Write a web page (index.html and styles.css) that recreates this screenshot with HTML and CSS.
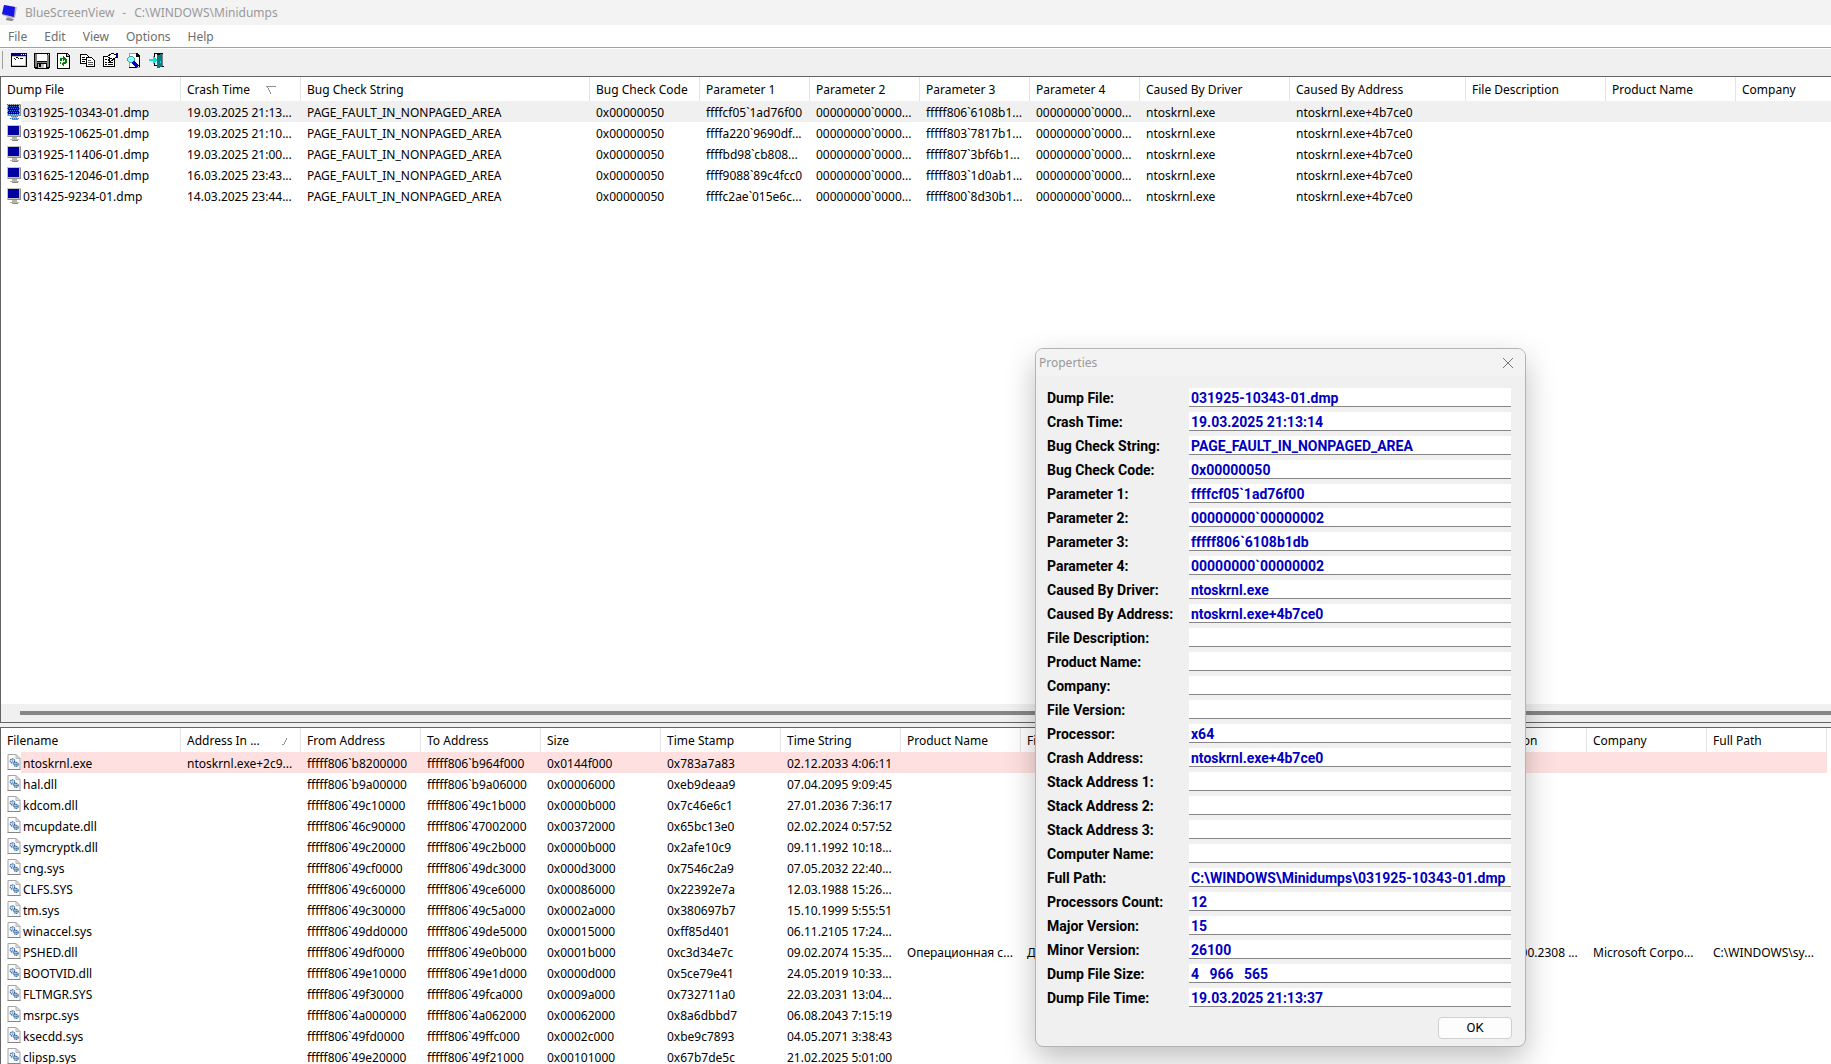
FILE: index.html
```html
<!DOCTYPE html>
<html lang="en">
<head>
<meta charset="utf-8">
<title>BlueScreenView</title>
<link rel="stylesheet" href="styles.css">
</head>
<body>
<svg class="defs" aria-hidden="true">
  <symbol id="dump" viewBox="0 0 14 16">
    <path fill="#c6c3b8" d="M0 0h14v12H0z"/>
    <path fill="#8f8d86" d="M13 1h1v11H1v-1h12z"/>
    <path fill="#0000a0" d="M1 1h11v9H1z"/>
    <path fill="#b5b3aa" d="M5 12h5v2H5zM3 14h9v1H3z"/>
    <path fill="#8a887f" d="M5 15h6v1H5z"/>
  </symbol>
  <symbol id="dump-selected" viewBox="0 0 14 16">
    <use href="#dump"/>
    <path stroke="#2f78d0" stroke-dasharray="1 1" d="M0 .5h14M1 2.500h12M0 4.500h14M1 6.500h12M0 8.500h14M1 10.500h12M4 12.500h7M3 14.500h9"/>
  </symbol>
  <symbol id="dll" viewBox="0 0 13 16">
    <path fill="#fafafa" stroke="#a4a4a4" d="M.5.5h8l4 4v11H.5z"/>
    <path fill="#e4e4e4" stroke="#b4b4b4" d="M8.500.5v4h4z"/>
    <path stroke="#858585" d="M0 15.500h13"/>
    <circle cx="5" cy="7" r="2.200" fill="#dbe8f5" stroke="#2c6298" stroke-width="1.300" stroke-dasharray="1.200 .6"/>
    <circle cx="5" cy="7" r=".6" fill="#2c6298"/>
    <circle cx="8.600" cy="10.400" r="2" fill="#c5dbf0" stroke="#2c6298" stroke-width="1.300" stroke-dasharray="1.200 .5"/>
    <circle cx="8.600" cy="10.400" r=".6" fill="#17456f"/>
  </symbol>
</svg>

<div class="window">
  <header class="titlebar">
    <svg class="app-icon" viewBox="0 0 15 16" aria-hidden="true">
      <path fill="#b9b9b9" d="M2 0l13 2-2 11-4 0 3 2-2 1-6-1 0-2 2-1L0 10z"/>
      <path fill="#1414e6" d="M2 0l11 2-1 10L0 9z"/>
      <path fill="#888" d="M5 13l7 1-2 2-6-1z"/>
    </svg>
    <span>BlueScreenView</span><span>-</span><span>C:\WINDOWS\Minidumps</span>
  </header>

  <nav class="menubar">
    <button>File</button><button>Edit</button><button>View</button><button>Options</button><button>Help</button>
  </nav>

  <div class="toolbar">
    <button aria-label="Advanced options"><svg viewBox="0 0 16 16"><path fill="#000" d="M0 0h16v14H0z"/><path fill="#fff" d="M1 4h14v9H1z"/><path fill="#000080" d="M1 0h15v3H1z"/><path fill="#c0c0c0" d="M1 3h14v1H1zM14 4h1v9h-1zM1 12h14v1H1z"/><path fill="#fff" d="M10 1h1v1h-1zM12 1h1v1h-1zM14 1h1v1h-1z"/><path fill="#000" d="M3 5h1v1H3zM5 4h2v1H5zM7 5h1v1H7zM9 5h3v1H9zM4 6h1v1H4z"/></svg></button>
    <button aria-label="Save"><svg viewBox="0 0 16 16"><path fill="#000" d="M0 0h16v15h-1v1H1v-1H0z"/><path fill="#808080" d="M1 1h2v13H1zM13 2h2v12h-2zM3 9h10v1H3z"/><path fill="#fff" d="M3 1h10v7H3zM14 1h1v1h-1zM10 11h2v4h-2z"/><path fill="#c0c0c0" d="M4 11h6v4H4z"/><path fill="#000" d="M5 11h2v3H5z"/></svg></button>
    <button aria-label="Refresh"><svg viewBox="0 0 16 16"><path fill="#000" d="M0 0h10l3 3v13H0z"/><path fill="#fff" d="M1 1h8v3h3v11H1z"/><path fill="#c0c0c0" d="M10 1l2 2h-2z"/><path fill="#008000" d="M6 3l3 2-3 3V6H5v2H3V5h3zM8 6h2v4H9v1H7v2l-3-2 3-3v1h1zM3 9h1v2H3z"/></svg></button>
    <button aria-label="Copy"><svg viewBox="0 0 16 16"><path fill="#fff" stroke="#000" d="M.5 1.500h6l2 2v7h-8z"/><path stroke="#000" d="M2 4.500h3M2 6.500h4M2 8.500h3"/><path fill="#fff" stroke="#000" d="M6.500 4.500h5l3 3v6h-8z"/><path stroke="#555" d="M8 7.500h3M8 9.500h5M8 11.500h5"/></svg></button>
    <button aria-label="Properties"><svg viewBox="0 0 16 16"><path fill="#fff" stroke="#000" d="M.5 3.500h11v10H.5z"/><path stroke="#000" d="M2 6.500h2M2 9.500h2M5 9.500h5M2 11.500h2M5 11.500h5"/><path fill="#fff" stroke="#000" d="M4.500 3.500l4-3 5 1v3l-3 1-1 2-3 1-1-2 2-1-2-1z"/><path fill="#000080" d="M13 0h2v5h-2z"/><path fill="#fff" d="M6 3h5v1H6z"/></svg></button>
    <button aria-label="Find"><svg viewBox="0 0 16 16"><path fill="#fff" stroke="#a0a0a0" d="M3.500.5h7l3 3v11h-10z"/><path fill="#000" d="M10 0h1l3 3v11h-1V4h-3zM3 14h8v1H3z"/><path fill="#80ffff" stroke="#45a0a0" d="M1.500 5.500l2-2h3l2 2v2l-2 2h-3l-2-2z"/><path fill="#fff" d="M3 5h1v1H3zM5 6h1v1H5zM3 7h1v1H3z"/><path stroke="#0000c0" stroke-width="3" d="M7 9l5 5"/></svg></button>
    <button aria-label="Exit"><svg viewBox="0 0 16 16"><path fill="#000" d="M5 0h9v13h1v1h-3v-1H5v-3h1v2h2V1H6v4H5z"/><path fill="#fff" d="M6 1h2v3H6zM6 10h2v2H6z"/><path fill="#008080" d="M8 2l5-1v13l-5 1z"/><path fill="#808080" d="M13 1h1v12h-1z"/><path fill="#00e5e5" d="M0 6h4V3l5 4-5 4V8H0zM11 8h1v2h-1z"/></svg></button>
  </div>

  <main class="panes">
    <section class="pane">
      <table class="list dumps">
        <colgroup><col class="w180"><col class="w120"><col class="w289"><col class="w110"><col class="w110"><col class="w110"><col class="w110"><col class="w110"><col class="w150"><col class="w176"><col class="w140"><col class="w130"><col class="w120"></colgroup>
        <thead><tr><th>Dump File</th><th>Crash Time<svg class="sort down" viewBox="0 0 10 8" aria-hidden="true"><path fill="#909090" d="M0 0h10v1H0zM1 1h1v1H1zM2 2h1v2H2zM3 4h1v2H3zM4 6h1v2H4z"/></svg></th><th>Bug Check String</th><th>Bug Check Code</th><th>Parameter 1</th><th>Parameter 2</th><th>Parameter 3</th><th>Parameter 4</th><th>Caused By Driver</th><th>Caused By Address</th><th>File Description</th><th>Product Name</th><th>Company</th></tr></thead>
        <tbody>
          <tr class="selected"><td><svg><use href="#dump-selected"/></svg>031925-10343-01.dmp</td><td>19.03.2025 21:13...</td><td>PAGE_FAULT_IN_NONPAGED_AREA</td><td>0x00000050</td><td>ffffcf05`1ad76f00</td><td>00000000`0000...</td><td>fffff806`6108b1...</td><td>00000000`0000...</td><td>ntoskrnl.exe</td><td>ntoskrnl.exe+4b7ce0</td><td colspan="3"></td></tr>
          <tr><td><svg><use href="#dump"/></svg>031925-10625-01.dmp</td><td>19.03.2025 21:10...</td><td>PAGE_FAULT_IN_NONPAGED_AREA</td><td>0x00000050</td><td>ffffa220`9690df...</td><td>00000000`0000...</td><td>fffff803`7817b1...</td><td>00000000`0000...</td><td>ntoskrnl.exe</td><td>ntoskrnl.exe+4b7ce0</td><td colspan="3"></td></tr>
          <tr><td><svg><use href="#dump"/></svg>031925-11406-01.dmp</td><td>19.03.2025 21:00...</td><td>PAGE_FAULT_IN_NONPAGED_AREA</td><td>0x00000050</td><td>ffffbd98`cb808...</td><td>00000000`0000...</td><td>fffff807`3bf6b1...</td><td>00000000`0000...</td><td>ntoskrnl.exe</td><td>ntoskrnl.exe+4b7ce0</td><td colspan="3"></td></tr>
          <tr><td><svg><use href="#dump"/></svg>031625-12046-01.dmp</td><td>16.03.2025 23:43...</td><td>PAGE_FAULT_IN_NONPAGED_AREA</td><td>0x00000050</td><td>ffff9088`89c4fcc0</td><td>00000000`0000...</td><td>fffff803`1d0ab1...</td><td>00000000`0000...</td><td>ntoskrnl.exe</td><td>ntoskrnl.exe+4b7ce0</td><td colspan="3"></td></tr>
          <tr><td><svg><use href="#dump"/></svg>031425-9234-01.dmp</td><td>14.03.2025 23:44...</td><td>PAGE_FAULT_IN_NONPAGED_AREA</td><td>0x00000050</td><td>ffffc2ae`015e6c...</td><td>00000000`0000...</td><td>fffff800`8d30b1...</td><td>00000000`0000...</td><td>ntoskrnl.exe</td><td>ntoskrnl.exe+4b7ce0</td><td colspan="3"></td></tr>
        </tbody>
      </table>
      <div class="scrollbar"><div class="thumb"></div></div>
    </section>

    <section class="pane">
      <table class="list drivers">
        <colgroup><col class="w180"><col class="w120"><col class="w120"><col class="w120"><col class="w120"><col class="w120"><col class="w120"><col class="w120"><col class="w446"><col class="w120"><col class="w120"><col class="w120"></colgroup>
        <thead><tr><th>Filename</th><th>Address In ...<svg class="sort up" viewBox="0 0 6 7" aria-hidden="true"><path fill="#909090" d="M0 6h2v1H0zM2 4h1v2H2zM3 2h1v2H3zM4 0h1v2H4z"/></svg></th><th>From Address</th><th>To Address</th><th>Size</th><th>Time Stamp</th><th>Time String</th><th>Product Name</th><th>File Description</th><th>File Version</th><th>Company</th><th>Full Path</th></tr></thead>
        <tbody>
          <tr class="crashed"><td><svg><use href="#dll"/></svg>ntoskrnl.exe</td><td>ntoskrnl.exe+2c9...</td><td>fffff806`b8200000</td><td>fffff806`b964f000</td><td>0x0144f000</td><td>0x783a7a83</td><td>02.12.2033 4:06:11</td><td colspan="5"></td></tr>
          <tr><td><svg><use href="#dll"/></svg>hal.dll</td><td></td><td>fffff806`b9a00000</td><td>fffff806`b9a06000</td><td>0x00006000</td><td>0xeb9deaa9</td><td>07.04.2095 9:09:45</td><td colspan="5"></td></tr>
          <tr><td><svg><use href="#dll"/></svg>kdcom.dll</td><td></td><td>fffff806`49c10000</td><td>fffff806`49c1b000</td><td>0x0000b000</td><td>0x7c46e6c1</td><td>27.01.2036 7:36:17</td><td colspan="5"></td></tr>
          <tr><td><svg><use href="#dll"/></svg>mcupdate.dll</td><td></td><td>fffff806`46c90000</td><td>fffff806`47002000</td><td>0x00372000</td><td>0x65bc13e0</td><td>02.02.2024 0:57:52</td><td colspan="5"></td></tr>
          <tr><td><svg><use href="#dll"/></svg>symcryptk.dll</td><td></td><td>fffff806`49c20000</td><td>fffff806`49c2b000</td><td>0x0000b000</td><td>0x2afe10c9</td><td>09.11.1992 10:18...</td><td colspan="5"></td></tr>
          <tr><td><svg><use href="#dll"/></svg>cng.sys</td><td></td><td>fffff806`49cf0000</td><td>fffff806`49dc3000</td><td>0x000d3000</td><td>0x7546c2a9</td><td>07.05.2032 22:40...</td><td colspan="5"></td></tr>
          <tr><td><svg><use href="#dll"/></svg>CLFS.SYS</td><td></td><td>fffff806`49c60000</td><td>fffff806`49ce6000</td><td>0x00086000</td><td>0x22392e7a</td><td>12.03.1988 15:26...</td><td colspan="5"></td></tr>
          <tr><td><svg><use href="#dll"/></svg>tm.sys</td><td></td><td>fffff806`49c30000</td><td>fffff806`49c5a000</td><td>0x0002a000</td><td>0x380697b7</td><td>15.10.1999 5:55:51</td><td colspan="5"></td></tr>
          <tr><td><svg><use href="#dll"/></svg>winaccel.sys</td><td></td><td>fffff806`49dd0000</td><td>fffff806`49de5000</td><td>0x00015000</td><td>0xff85d401</td><td>06.11.2105 17:24...</td><td colspan="5"></td></tr>
          <tr><td><svg><use href="#dll"/></svg>PSHED.dll</td><td></td><td>fffff806`49df0000</td><td>fffff806`49e0b000</td><td>0x0001b000</td><td>0xc3d34e7c</td><td>09.02.2074 15:35...</td><td>Операционная с...</td><td>Д...</td><td>10.0.26100.2308 ...</td><td>Microsoft Corpo...</td><td>C:\WINDOWS\sy...</td></tr>
          <tr><td><svg><use href="#dll"/></svg>BOOTVID.dll</td><td></td><td>fffff806`49e10000</td><td>fffff806`49e1d000</td><td>0x0000d000</td><td>0x5ce79e41</td><td>24.05.2019 10:33...</td><td colspan="5"></td></tr>
          <tr><td><svg><use href="#dll"/></svg>FLTMGR.SYS</td><td></td><td>fffff806`49f30000</td><td>fffff806`49fca000</td><td>0x0009a000</td><td>0x732711a0</td><td>22.03.2031 13:04...</td><td colspan="5"></td></tr>
          <tr><td><svg><use href="#dll"/></svg>msrpc.sys</td><td></td><td>fffff806`4a000000</td><td>fffff806`4a062000</td><td>0x00062000</td><td>0x8a6dbbd7</td><td>06.08.2043 7:15:19</td><td colspan="5"></td></tr>
          <tr><td><svg><use href="#dll"/></svg>ksecdd.sys</td><td></td><td>fffff806`49fd0000</td><td>fffff806`49ffc000</td><td>0x0002c000</td><td>0xbe9c7893</td><td>04.05.2071 3:38:43</td><td colspan="5"></td></tr>
          <tr><td><svg><use href="#dll"/></svg>clipsp.sys</td><td></td><td>fffff806`49e20000</td><td>fffff806`49f21000</td><td>0x00101000</td><td>0x67b7de5c</td><td>21.02.2025 5:01:00</td><td colspan="5"></td></tr>
        </tbody>
      </table>
    </section>
  </main>
</div>

<div class="dialog" role="dialog" aria-labelledby="dialog-title">
  <div class="dialog-head">
    <span id="dialog-title">Properties</span>
    <button class="close" aria-label="Close"><svg viewBox="0 0 10 10"><path stroke="#777" fill="none" d="M0 0l10 10M10 0L0 10"/></svg></button>
  </div>
  <form class="fields">
    <label for="f1">Dump File:</label><input id="f1" readonly value="031925-10343-01.dmp">
    <label for="f2">Crash Time:</label><input id="f2" readonly value="19.03.2025 21:13:14">
    <label for="f3">Bug Check String:</label><input id="f3" readonly value="PAGE_FAULT_IN_NONPAGED_AREA">
    <label for="f4">Bug Check Code:</label><input id="f4" readonly value="0x00000050">
    <label for="f5">Parameter 1:</label><input id="f5" readonly value="ffffcf05`1ad76f00">
    <label for="f6">Parameter 2:</label><input id="f6" readonly value="00000000`00000002">
    <label for="f7">Parameter 3:</label><input id="f7" readonly value="fffff806`6108b1db">
    <label for="f8">Parameter 4:</label><input id="f8" readonly value="00000000`00000002">
    <label for="f9">Caused By Driver:</label><input id="f9" readonly value="ntoskrnl.exe">
    <label for="f10">Caused By Address:</label><input id="f10" readonly value="ntoskrnl.exe+4b7ce0">
    <label for="f11">File Description:</label><input id="f11" readonly>
    <label for="f12">Product Name:</label><input id="f12" readonly>
    <label for="f13">Company:</label><input id="f13" readonly>
    <label for="f14">File Version:</label><input id="f14" readonly>
    <label for="f15">Processor:</label><input id="f15" readonly value="x64">
    <label for="f16">Crash Address:</label><input id="f16" readonly value="ntoskrnl.exe+4b7ce0">
    <label for="f17">Stack Address 1:</label><input id="f17" readonly>
    <label for="f18">Stack Address 2:</label><input id="f18" readonly>
    <label for="f19">Stack Address 3:</label><input id="f19" readonly>
    <label for="f20">Computer Name:</label><input id="f20" readonly>
    <label for="f21">Full Path:</label><input id="f21" readonly value="C:\WINDOWS\Minidumps\031925-10343-01.dmp">
    <label for="f22">Processors Count:</label><input id="f22" readonly value="12">
    <label for="f23">Major Version:</label><input id="f23" readonly value="15">
    <label for="f24">Minor Version:</label><input id="f24" readonly value="26100">
    <label for="f25">Dump File Size:</label><input id="f25" readonly value="4&nbsp;&nbsp; 966&nbsp;&nbsp; 565">
    <label for="f26">Dump File Time:</label><input id="f26" readonly value="19.03.2025 21:13:37">
  </form>
  <div class="actions"><button class="ok">OK</button></div>
</div>
</body>
</html>
```
FILE: styles.css
```css
* { box-sizing: border-box; }

body {
  margin: 0;
  overflow: hidden;
  font: 12px/20px "Noto Sans", "Open Sans", sans-serif;
  color: #000;
  background: #f0f0f0;
}

button {
  margin: 0;
  padding: 0;
  border: 0;
  background: none;
  font: inherit;
  color: inherit;
}

svg { display: block; shape-rendering: crispEdges; }
.defs { position: absolute; width: 0; height: 0; }

.window {
  display: flex;
  flex-direction: column;
  height: 100vh;
}

.titlebar {
  display: flex;
  align-items: center;
  gap: 8px;
  height: 25px;
  padding-left: 2px;
  background: #f3f3f3;
  color: #999;
}
.app-icon { width: 15px; height: 16px; shape-rendering: auto; }

.menubar {
  display: flex;
  gap: 17px;
  height: 23px;
  padding: 1px 0 0 8px;
  background: #fff;
  color: #6d6d6d;
  border-bottom: 1px solid #a0a0a0;
}

.toolbar {
  display: flex;
  align-items: flex-start;
  gap: 7px;
  height: 28px;
  padding: 4px 0 0 11px;
  border-top: 1px solid #fff;
  background: linear-gradient(#a0a0a0, #a0a0a0) 2px 2px / 1px 18px no-repeat #f0f0f0;
}
.toolbar svg { width: 16px; height: 16px; }

.panes {
  flex: 1;
  min-height: 0;
  display: grid;
  grid-template-columns: minmax(0, 1fr);
  grid-template-rows: minmax(0, 647fr) minmax(0, 337fr);
  gap: 4px;
}

.pane {
  display: flex;
  flex-direction: column;
  justify-content: space-between;
  overflow: hidden;
  background: #fff;
  border: 1px solid #646464;
  border-right: 0;
}
.pane:last-child { border-bottom: 0; }

.list {
  table-layout: fixed;
  border-collapse: separate;
  border-spacing: 0;
}
.dumps { width: 1855px; }
.drivers { width: 1826px; }
.w110 { width: 110px; }
.w120 { width: 120px; }
.w130 { width: 130px; }
.w140 { width: 140px; }
.w150 { width: 150px; }
.w176 { width: 176px; }
.w180 { width: 180px; }
.w289 { width: 289px; }
.w446 { width: 446px; }

.list th {
  height: 24px;
  padding: 2px 0 0 6px;
  border-right: 1px solid #e5e5e5;
  font-weight: 400;
  text-align: left;
  white-space: nowrap;
  overflow: hidden;
}
.list td {
  height: 21px;
  padding: 3px 0 0 6px;
  line-height: 18px;
  vertical-align: top;
  white-space: nowrap;
  overflow: hidden;
}
.list td:first-child { background: linear-gradient(#fff, #fff) 0 0 / 20px 100% no-repeat; }
.list td svg {
  float: left;
  width: 14px;
  height: 16px;
  margin-right: 2px;
  shape-rendering: auto;
}
.drivers td svg { margin-top: -1px; }
.selected { background: #f0f0f0; }
.crashed { background: #ffe0e0; }

.sort { display: inline-block; }
.down { width: 10px; height: 8px; margin-left: 16px; }
.up { width: 6px; height: 7px; margin-left: 22px; }

.scrollbar {
  height: 18px;
  padding: 7px 0 0 19px;
  background: #f0f0f0;
}
.thumb { height: 4px; background: #858585; }

.dialog {
  position: absolute;
  left: 1035px;
  top: 348px;
  width: 491px;
  border: 1px solid #b4b4b4;
  border-radius: 8px;
  overflow: hidden;
  background: #f0f0f0;
  box-shadow: 0 12px 30px rgba(0, 0, 0, .25);
}
.dialog-head {
  display: flex;
  align-items: center;
  justify-content: space-between;
  height: 27px;
  padding: 0 12px 0 3px;
  background: #f3f3f3;
  color: #999;
}
.close svg { width: 10px; height: 10px; shape-rendering: auto; }

.fields {
  display: grid;
  grid-template-columns: 142px 1fr;
  grid-auto-rows: 19px;
  row-gap: 5px;
  padding: 12px 14px 0 11px;
  font: bold 14px/18px Roboto, "Liberation Sans", sans-serif;
}
.fields label { padding-top: 1px; }
.fields input {
  width: 100%;
  height: 19px;
  padding: 1px 2px 0;
  border: 0;
  border-bottom: 1px solid #858585;
  border-radius: 0;
  background: #fff;
  font: inherit;
  color: #0000c0;
}

.actions {
  display: flex;
  justify-content: flex-end;
  padding: 10px 13px 7px;
}
.ok {
  width: 74px;
  height: 22px;
  border: 1px solid #d0d0d0;
  border-radius: 4px;
  background: #fdfdfd;
  font: 13px/20px Roboto, "Liberation Sans", sans-serif;
}
```
